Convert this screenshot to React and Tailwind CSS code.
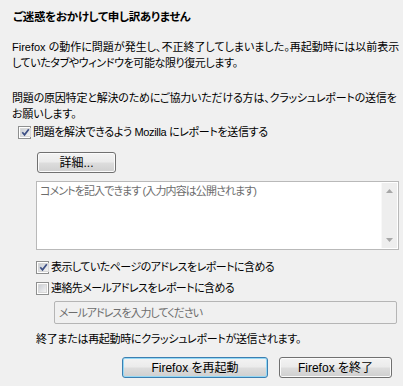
import React from "react";

const FONT = "[font-family:'Liberation_Sans','Noto_Sans_CJK_JP',sans-serif] [font-feature-settings:'palt']";

function Check({ checked }) {
  return (
    <span className="w-[13px] h-[13px] shrink-0 border border-[#8e8f8f] bg-white p-[1px] flex">
      <span className="flex-1 flex items-center justify-center bg-[linear-gradient(135deg,#cbcfd5_0%,#f2f2f2_100%)] border border-[#d8d8d8]">
        {checked && (
          <svg width="9" height="9" viewBox="0 0 9 9">
            <path d="M1.3 4.3 L3.5 6.8 L7.8 1.2" fill="none" stroke="#3d4f84" strokeWidth="1.7" />
          </svg>
        )}
      </span>
    </span>
  );
}

function Btn({ children, className = "", def = false }) {
  return (
    <div
      className={
        "h-[21px] rounded-[3px] border flex items-center justify-center text-[12px] text-black bg-[linear-gradient(#f3f3f3_0%,#ebebeb_48%,#dddddd_52%,#cfcfcf_100%)] " +
        (def
          ? "border-[#3c7fb1] shadow-[inset_0_0_0_1px_#94d8f5] "
          : "border-[#707070] shadow-[inset_0_0_0_1px_#fbfbfb] ") +
        className
      }
    >
      {children}
    </div>
  );
}

export default function App() {
  return (
    <div className={"w-[403px] h-[386px] overflow-hidden bg-[#f0f0f0] text-black text-[11px] leading-[16px] " + FONT}>
      <div className="pt-[9px] pl-[13px] font-bold text-[11.5px] tracking-[-0.3px] whitespace-nowrap">ご迷惑をおかけして申し訳ありません</div>
      <div className="mt-[14px] pl-[12px] whitespace-nowrap">
        Firefox の動作に問題が発生し、不正終了してしまいました。再起動時には以前表示
        <br />
        <span className="tracking-[-0.4px]">していたタブやウィンドウを可能な限り復元します。</span>
      </div>
      <div className="mt-[19px] pl-[12px] whitespace-nowrap tracking-[-0.2px]">
        問題の原因特定と解決のためにご協力いただける方は、クラッシュレポートの送信を
        <br />
        お願いします。
      </div>
      <div className="mt-[2px] pl-[18px] flex items-center gap-[2px] h-[16px] whitespace-nowrap">
        <Check checked />
        <span className="tracking-[-0.35px]">問題を解決できるよう Mozilla にレポートを送信する</span>
      </div>
      <div className="mt-[12px] pl-[37px]">
        <Btn className="w-[79px]">詳細...</Btn>
      </div>
      <div className="mt-[8px] ml-[36px] w-[363px] h-[69px] border border-[#b9b9b9] bg-white flex">
        <div className="flex-1 pl-[3px] pt-[1px] text-[#6d6d6d] whitespace-nowrap tracking-[-0.9px]">
          コメントを記入できます (入力内容は公開されます)
        </div>
        <div className="w-[16px] my-[1px] mr-[1px] bg-[#eeeeee] border-l border-[#f8f8f8] flex flex-col items-center justify-between py-[6px]">
          <svg width="7" height="4" viewBox="0 0 7 4">
            <path d="M0 4 L3.5 0 L7 4 Z" fill="#a7a7a7" />
          </svg>
          <svg width="7" height="4" viewBox="0 0 7 4">
            <path d="M0 0 L3.5 4 L7 0 Z" fill="#a7a7a7" />
          </svg>
        </div>
      </div>
      <div className="mt-[9px] pl-[36px] flex items-center gap-[2px] h-[16px] whitespace-nowrap">
        <Check checked />
        <span className="tracking-[-0.55px]">表示していたページのアドレスをレポートに含める</span>
      </div>
      <div className="mt-[5px] pl-[36px] flex items-center gap-[2px] h-[16px] whitespace-nowrap">
        <Check />
        <span className="tracking-[-0.6px]">連絡先メールアドレスをレポートに含める</span>
      </div>
      <div className="mt-[5px] ml-[54px] w-[343px] h-[23px] border border-[#b5b5b5] rounded-[2px] flex items-center pl-[4px] text-[#6d6d6d] whitespace-nowrap tracking-[-1px]">
        メールアドレスを入力してください
      </div>
      <div className="mt-[7px] pl-[36px] whitespace-nowrap tracking-[-0.3px]">終了または再起動時にクラッシュレポートが送信されます。</div>
      <div className="mt-[10px] flex justify-end gap-[11px] pr-[11px]">
        <Btn def className="w-[146px]">Firefox を再起動</Btn>
        <Btn className="w-[113px]">Firefox を終了</Btn>
      </div>
    </div>
  );
}
